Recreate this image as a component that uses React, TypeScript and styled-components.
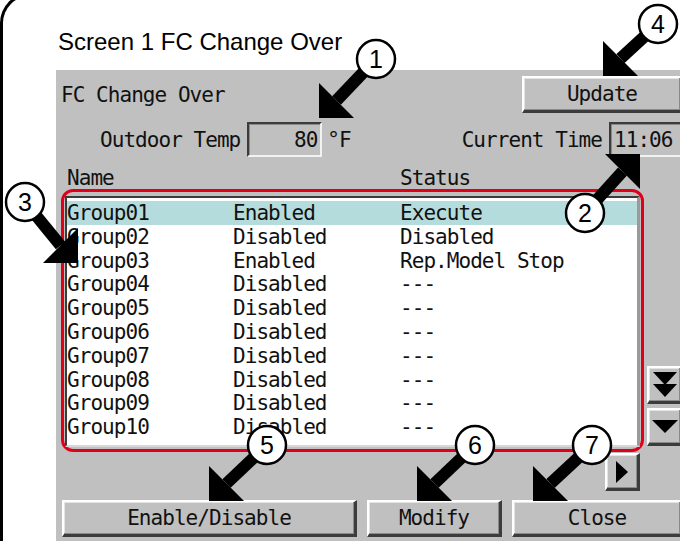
import styled, { createGlobalStyle } from 'styled-components';

const GlobalStyle = createGlobalStyle`
  html, body {
    margin: 0;
    padding: 0;
    background: #fff;
    overflow: hidden;
  }
`;

const Page = styled.div`
  position: relative;
  width: 680px;
  height: 541px;
  overflow: hidden;
  background: #fff;
`;

const Frame = styled.div`
  margin-top: -7px;
  width: 720px;
  height: 580px;
  padding-top: 32px;
  box-sizing: border-box;
  border-left: 3px solid #000;
  border-top: 3px solid #000;
  border-top-left-radius: 30px;
`;

const ScreenTitle = styled.div`
  margin-left: 55px;
  font-family: 'Liberation Sans', Arial, sans-serif;
  font-size: 24px;
  line-height: 28px;
  color: #000;
`;

const Panel = styled.div`
  margin: 14px 0 0 53px;
  width: 624px;
  height: 500px;
  padding: 6px 0 0 5px;
  box-sizing: border-box;
  background: #c0c0c0;
  display: flex;
  flex-direction: column;
  font-family: 'DejaVu Sans Mono', 'Liberation Mono', monospace;
  font-size: 21px;
  letter-spacing: -0.95px;
  color: #111;
`;

const HeaderRow = styled.div`
  display: flex;
  align-items: center;
  height: 37px;
`;

const PanelTitle = styled.div`
  flex: 1;
`;

const Button = styled.div<{ $width: number; $pull?: number }>`
  width: ${(p) => p.$width}px;
  margin-right: ${(p) => -(p.$pull || 0)}px;
  flex-shrink: 0;
  height: 100%;
  box-sizing: border-box;
  display: flex;
  align-items: center;
  justify-content: center;
  background: #c0c0c0;
  border-style: solid;
  border-width: 2px 3px 3px 2px;
  border-color: #fff #3c3c3c #3c3c3c #fff;
  box-shadow: inset -1px -1px 0 #8a8a8a, inset 1px 1px 0 #e4e4e4;
`;

const InfoRow = styled.div`
  display: flex;
  align-items: center;
  height: 35px;
  margin-top: 9px;
`;

const Label = styled.span<{ $indent?: number }>`
  margin-left: ${(p) => p.$indent || 0}px;
  white-space: pre;
`;

const ValueBox = styled.div<{ $width: number; $align: 'left' | 'right'; $pull?: number }>`
  width: ${(p) => p.$width}px;
  height: 100%;
  margin-left: 7px;
  margin-right: ${(p) => -(p.$pull || 0)}px;
  flex-shrink: 0;
  box-sizing: border-box;
  display: flex;
  align-items: center;
  justify-content: ${(p) => (p.$align === 'right' ? 'flex-end' : 'flex-start')};
  padding: 0 3px;
  border-style: solid;
  border-width: 2px;
  border-color: #3c3c3c #f2f2f2 #f2f2f2 #3c3c3c;
  box-shadow: inset 1px 1px 0 #8a8a8a;
`;

const Unit = styled.span`
  margin-left: 5px;
`;

const Spacer = styled.div`
  flex: 1;
`;

const Columns = styled.div`
  display: grid;
  grid-template-columns: 166px 167px 1fr;
  align-items: center;
`;

const HeadRow = styled(Columns)`
  height: 22px;
  margin-top: 9px;
  padding-left: 6px;
`;

const ListRow = styled.div`
  display: flex;
  height: 263px;
  margin-top: 1px;
`;

const RedFrame = styled.div`
  width: 583px;
  height: 100%;
  flex-shrink: 0;
  box-sizing: border-box;
  border: 3px solid #e1001a;
  border-radius: 12px;
  padding: 4px 1px 2px 1px;
`;

const ListBox = styled.div`
  height: 100%;
  box-sizing: border-box;
  background: #fff;
  border-style: solid;
  border-width: 2px 3px 2px 2px;
  border-color: #3c3c3c #9a9a9a #d8d8d8 #3c3c3c;
  padding-top: 3px;
`;

const ListItem = styled(Columns)<{ $selected?: boolean }>`
  height: 23.8px;
  background: ${(p) => (p.$selected ? '#b5dcdc' : 'transparent')};
  white-space: pre;
`;

const ScrollCol = styled.div`
  width: 36px;
  margin-left: 3px;
  flex-shrink: 0;
  display: flex;
  flex-direction: column;
  justify-content: flex-end;
  gap: 4px;
  padding-bottom: 6px;
`;

const ArrowButton = styled(Button)`
  height: 38px;
`;

const HScrollRow = styled.div`
  display: flex;
  justify-content: flex-end;
  height: 38px;
  margin-top: 1px;
  padding-right: 40px;
`;

const BottomRow = styled.div`
  display: flex;
  gap: 10px;
  height: 37px;
  margin-top: 9px;
  padding-left: 1px;
`;

const Overlay = styled.svg`
  position: absolute;
  left: 0;
  top: 0;
  pointer-events: none;
`;

const CalloutNumber = styled.text`
  font-family: 'Liberation Sans', Arial, sans-serif;
  font-size: 25px;
`;

const groups: [string, string, string][] = [
  ['Group01', 'Enabled', 'Execute'],
  ['Group02', 'Disabled', 'Disabled'],
  ['Group03', 'Enabled', 'Rep.Model Stop'],
  ['Group04', 'Disabled', '---'],
  ['Group05', 'Disabled', '---'],
  ['Group06', 'Disabled', '---'],
  ['Group07', 'Disabled', '---'],
  ['Group08', 'Disabled', '---'],
  ['Group09', 'Disabled', '---'],
  ['Group10', 'Disabled', '---'],
];

// circle centre (cx, cy) and arrow tip (tx, ty)
const callouts = [
  { n: 1, cx: 376, cy: 59, tx: 319, ty: 118 },
  { n: 2, cx: 585, cy: 213, tx: 640, ty: 154 },
  { n: 3, cx: 25, cy: 202, tx: 78, ty: 263 },
  { n: 4, cx: 658, cy: 24, tx: 603, ty: 76 },
  { n: 5, cx: 267, cy: 445, tx: 209, ty: 501 },
  { n: 6, cx: 475, cy: 445, tx: 417, ty: 501 },
  { n: 7, cx: 592, cy: 445, tx: 533, ty: 501 },
];

function Callout({ n, cx, cy, tx, ty }: (typeof callouts)[number]) {
  const L = 35;
  const sx = Math.sign(cx - tx);
  const sy = Math.sign(cy - ty);
  return (
    <g>
      <line
        x1={cx}
        y1={cy}
        x2={tx + (sx * L) / 2}
        y2={ty + (sy * L) / 2}
        stroke="#000"
        strokeWidth={12}
      />
      <polygon points={`${tx},${ty} ${tx + sx * L},${ty} ${tx},${ty + sy * L}`} fill="#000" />
      <circle cx={cx} cy={cy} r={19} fill="#fff" stroke="#000" strokeWidth={2.5} />
      <CalloutNumber x={cx} y={cy + 9} textAnchor="middle">
        {n}
      </CalloutNumber>
    </g>
  );
}

export default function App() {
  return (
    <>
      <GlobalStyle />
      <Page>
        <Frame>
          <ScreenTitle>Screen 1 FC Change Over</ScreenTitle>
          <Panel>
            <HeaderRow>
              <PanelTitle>FC Change Over</PanelTitle>
              <Button $width={161} $pull={3}>Update</Button>
            </HeaderRow>
            <InfoRow>
              <Label $indent={39}>Outdoor Temp</Label>
              <ValueBox $width={75} $align="right">80</ValueBox>
              <Unit>°F</Unit>
              <Spacer />
              <Label>Current Time</Label>
              <ValueBox $width={74} $align="left" $pull={3}>11:06</ValueBox>
            </InfoRow>
            <HeadRow>
              <span>Name</span>
              <span />
              <span>Status</span>
            </HeadRow>
            <ListRow>
              <RedFrame>
                <ListBox>
                  {groups.map(([name, state, status], i) => (
                    <ListItem key={name} $selected={i === 0}>
                      <span>{name}</span>
                      <span>{state}</span>
                      <span>{status}</span>
                    </ListItem>
                  ))}
                </ListBox>
              </RedFrame>
              <ScrollCol>
                <ArrowButton $width={36} $pull={3}>
                  <svg width="26" height="26" viewBox="0 0 26 26">
                    <polygon points="1,0 25,0 13,13" fill="#000" />
                    <polygon points="1,12 25,12 13,25" fill="#000" />
                  </svg>
                </ArrowButton>
                <ArrowButton $width={36} $pull={3}>
                  <svg width="26" height="14" viewBox="0 0 26 14">
                    <polygon points="0,0 26,0 13,13" fill="#000" />
                  </svg>
                </ArrowButton>
              </ScrollCol>
            </ListRow>
            <HScrollRow>
              <ArrowButton $width={35}>
                <svg width="14" height="22" viewBox="0 0 14 22">
                  <polygon points="1,0 13,11 1,22" fill="#000" />
                </svg>
              </ArrowButton>
            </HScrollRow>
            <BottomRow>
              <Button $width={295}>Enable/Disable</Button>
              <Button $width={135}>Modify</Button>
              <Button $width={171}>Close</Button>
            </BottomRow>
          </Panel>
        </Frame>
        <Overlay width={680} height={541} viewBox="0 0 680 541">
          {callouts.map((c) => (
            <Callout key={c.n} {...c} />
          ))}
        </Overlay>
      </Page>
    </>
  );
}
